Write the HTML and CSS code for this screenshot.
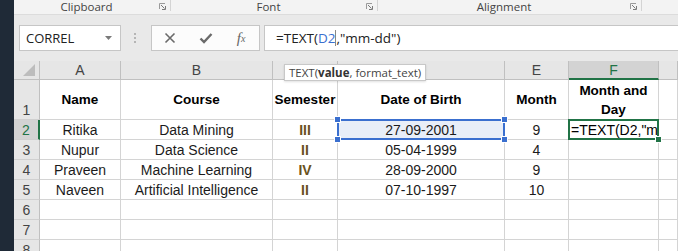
FILE: index.html
```html
<!DOCTYPE html>
<html lang="en">
<head>
  <meta charset="UTF-8">
  <title>Excel - TEXT function</title>
  <link rel="stylesheet" href="styles.css">
</head>
<body>
  <div class="app">
    <div class="side"></div>
    <div class="main">

      <div class="ribbon">
        <div class="group g-clip">
          <span class="group-label">Clipboard</span>
          <svg class="launcher" width="7" height="7" viewBox="0 0 7 7"><path d="M0.5 6V0.5H6" fill="none" stroke="#9a9a9a"/><path d="M2 2L5.5 5.5M3 6.5H6.5V3" fill="none" stroke="#7a7a7a"/></svg>
        </div>
        <div class="group g-font">
          <span class="group-label">Font</span>
          <svg class="launcher" width="7" height="7" viewBox="0 0 7 7"><path d="M0.5 6V0.5H6" fill="none" stroke="#9a9a9a"/><path d="M2 2L5.5 5.5M3 6.5H6.5V3" fill="none" stroke="#7a7a7a"/></svg>
        </div>
        <div class="group g-align">
          <span class="group-label">Alignment</span>
          <svg class="launcher" width="7" height="7" viewBox="0 0 7 7"><path d="M0.5 6V0.5H6" fill="none" stroke="#9a9a9a"/><path d="M2 2L5.5 5.5M3 6.5H6.5V3" fill="none" stroke="#7a7a7a"/></svg>
        </div>
      </div>

      <div class="fbar">
        <div class="namebox">
          <span>CORREL</span>
          <svg width="7" height="4" viewBox="0 0 7 4"><path d="M0 0H7L3.5 4Z" fill="#7a7a7a"/></svg>
        </div>
        <div class="grip"><i></i><i></i><i></i></div>
        <div class="fxbox">
          <span class="fx-btn">
            <svg width="12" height="12" viewBox="0 0 12 12"><path d="M1.5 1.5L10.5 10.5M10.5 1.5L1.5 10.5" stroke="#6a6a6a" stroke-width="1.6"/></svg>
          </span>
          <span class="fx-btn">
            <svg width="14" height="12" viewBox="0 0 14 12"><path d="M1.5 6.5L5 10L12.5 2" fill="none" stroke="#6a6a6a" stroke-width="2.4"/></svg>
          </span>
          <span class="fx-btn fx-label">f<sub>x</sub></span>
        </div>
        <div class="formula">=TEXT(<span class="ref">D2</span><span class="caret"></span>,"mm-dd")</div>
      </div>

      <div class="sheet">
        <div class="row hdr">
          <div class="corner"><i></i></div>
          <div class="ch">A</div>
          <div class="ch">B</div>
          <div class="ch">C</div>
          <div class="ch">D</div>
          <div class="ch">E</div>
          <div class="ch sel">F</div>
          <div class="ch"></div>
        </div>

        <div class="row tall">
          <div class="rh">1</div>
          <div class="c b">Name</div>
          <div class="c b">Course</div>
          <div class="c b">Semester</div>
          <div class="c b">Date of Birth</div>
          <div class="c b">Month</div>
          <div class="c b">Month and Day</div>
          <div class="c"></div>
        </div>

        <div class="row">
          <div class="rh sel">2</div>
          <div class="c">Ritika</div>
          <div class="c">Data Mining</div>
          <div class="c sem">III</div>
          <div class="c ref-cell">27-09-2001
            <span class="ref-box"></span>
            <span class="h tl"></span><span class="h tr"></span><span class="h bl"></span><span class="h br"></span>
          </div>
          <div class="c">9</div>
          <div class="c active"><span class="edit">=TEXT(D2,"mm-dd")</span><span class="act-box"></span><span class="fill"></span></div>
          <div class="c"></div>
        </div>

        <div class="row">
          <div class="rh">3</div>
          <div class="c">Nupur</div>
          <div class="c">Data Science</div>
          <div class="c sem">II</div>
          <div class="c">05-04-1999</div>
          <div class="c">4</div>
          <div class="c"></div>
          <div class="c"></div>
        </div>

        <div class="row">
          <div class="rh">4</div>
          <div class="c">Praveen</div>
          <div class="c">Machine Learning</div>
          <div class="c sem">IV</div>
          <div class="c">28-09-2000</div>
          <div class="c">9</div>
          <div class="c"></div>
          <div class="c"></div>
        </div>

        <div class="row">
          <div class="rh">5</div>
          <div class="c">Naveen</div>
          <div class="c">Artificial Intelligence</div>
          <div class="c sem">II</div>
          <div class="c">07-10-1997</div>
          <div class="c">10</div>
          <div class="c"></div>
          <div class="c"></div>
        </div>

        <div class="row">
          <div class="rh">6</div>
          <div class="c"></div><div class="c"></div><div class="c"></div><div class="c"></div>
          <div class="c"></div><div class="c"></div><div class="c"></div>
        </div>

        <div class="row">
          <div class="rh">7</div>
          <div class="c"></div><div class="c"></div><div class="c"></div><div class="c"></div>
          <div class="c"></div><div class="c"></div><div class="c"></div>
        </div>

        <div class="row">
          <div class="rh">8</div>
          <div class="c"></div><div class="c"></div><div class="c"></div><div class="c"></div>
          <div class="c"></div><div class="c"></div><div class="c"></div>
        </div>

        <div class="tooltip">TEXT(<b>value</b>, format_text)</div>
      </div>

    </div>
  </div>
</body>
</html>
```

FILE: styles.css
```css
* { box-sizing: border-box; margin: 0; padding: 0; }

body {
  width: 678px;
  height: 251px;
  overflow: hidden;
  background: #fff;
  font-family: "Liberation Sans", Arial, sans-serif;
}

.app {
  display: flex;
  height: 251px;
}

.side {
  width: 14px;
  flex-shrink: 0;
  background: #1f2a37;
}

.main {
  flex: 1;
  min-width: 0;
  display: flex;
  flex-direction: column;
}

/* ribbon group labels */
.ribbon {
  height: 15px;
  flex-shrink: 0;
  display: flex;
  background: #f3f3f3;
  border-bottom: 1px solid #dcdcdc;
  font-family: "Open Sans", sans-serif;
  font-size: 11.5px;
  color: #444;
}

.group {
  display: flex;
  align-items: flex-start;
  height: 11px;
  padding-right: 4px;
  border-right: 1px solid #d4d4d4;
}

.g-clip { width: 157px; }
.g-font { width: 207px; }
.g-align { width: 264px; }

.group-label {
  flex: 1;
  text-align: center;
  line-height: 14px;
}

.launcher { margin-top: 3px; }

/* formula bar */
.fbar {
  height: 46px;
  flex-shrink: 0;
  display: flex;
  align-items: flex-start;
  padding: 10px 0 0 5px;
  background: #e9e9e9;
}

.namebox {
  width: 102px;
  height: 26px;
  display: flex;
  align-items: center;
  justify-content: space-between;
  padding: 0 8px 0 6px;
  background: #fff;
  border: 1px solid #c6c6c6;
  font-family: "Open Sans", sans-serif;
  font-size: 13px;
  color: #222;
}

.grip {
  width: 3px;
  margin: 8px 14px 0 13px;
  display: flex;
  flex-direction: column;
  gap: 2px;
}

.grip i {
  width: 2px;
  height: 2px;
  background: #b5b5b5;
}

.fxbox {
  width: 109px;
  height: 26px;
  display: flex;
  align-items: center;
  background: #fcfcfc;
  border: 1px solid #c6c6c6;
}

.fx-btn {
  width: 36px;
  display: flex;
  justify-content: center;
  align-items: center;
}

.fx-label {
  font-family: "Liberation Serif", serif;
  font-style: italic;
  font-size: 15px;
  color: #666;
}

.fx-label sub {
  font-size: 10px;
  vertical-align: -1px;
}

.formula {
  flex: 1;
  height: 26px;
  margin-left: 4px;
  display: flex;
  align-items: center;
  padding-left: 11px;
  background: #fff;
  border: 1px solid #c6c6c6;
  border-right: none;
  white-space: nowrap;
  font-family: "Open Sans", sans-serif;
  font-size: 13.5px;
  color: #222;
}

.formula .ref { color: #3a6fcf; }

.caret {
  width: 1px;
  height: 16px;
  background: #888;
}

/* sheet grid */
.sheet {
  position: relative;
  flex: 1;
  overflow: hidden;
}

.row {
  display: grid;
  grid-template-columns: 26px 81px 152px 65px 167px 64px 90px 1fr;
  height: 20px;
}

.row.hdr { height: 19px; }
.row.tall { height: 40px; }

.c {
  display: flex;
  align-items: center;
  justify-content: center;
  text-align: center;
  border-right: 1px solid #d4d4d4;
  border-bottom: 1px solid #d4d4d4;
  font-size: 14px;
  color: #1b1b1b;
  white-space: nowrap;
}

.c.b {
  font-size: 13.5px;
  font-weight: bold;
  color: #000;
  white-space: normal;
  line-height: 19px;
}

.c.sem {
  font-weight: bold;
  color: #6a5220;
}

.corner,
.ch,
.rh {
  background: #e6e6e6;
  border-right: 1px solid #c0c0c0;
  border-bottom: 1px solid #c0c0c0;
  color: #444;
  font-size: 14px;
}

.corner {
  display: flex;
  justify-content: flex-end;
  align-items: flex-end;
  padding: 0 4px 3px 0;
}

.corner i {
  width: 12px;
  height: 12px;
  background: #bdbdbd;
  clip-path: polygon(100% 0, 100% 100%, 0 100%);
}

.ch {
  display: flex;
  align-items: center;
  justify-content: center;
}

.ch.sel {
  background: #d3d3d3;
  color: #217346;
  border-bottom: 2px solid #217346;
}

.rh {
  display: flex;
  align-items: flex-end;
  justify-content: center;
  padding-bottom: 1px;
  border-bottom-color: #d0d0d0;
}

.rh.sel {
  background: #d3d3d3;
  color: #217346;
  border-right: 2px solid #217346;
}

/* referenced cell D2 */
.ref-cell {
  position: relative;
  background: #e8eef8;
}

.ref-box {
  position: absolute;
  left: -1px;
  top: -1px;
  right: -1px;
  bottom: -1px;
  border: 2px solid #3a6fcf;
}

.h {
  position: absolute;
  width: 7px;
  height: 7px;
  background: #3a6fcf;
  border: 1px solid #fff;
}

.h.tl { left: -4px; top: -4px; }
.h.tr { right: -4px; top: -4px; }
.h.bl { left: -4px; bottom: -4px; }
.h.br { right: -4px; bottom: -4px; }

/* active cell F2 */
.c.active {
  position: relative;
  justify-content: flex-start;
  padding-left: 2px;
}

.edit {
  display: block;
  overflow: hidden;
  width: 100%;
  text-align: left;
  color: #000;
}

.act-box {
  position: absolute;
  left: -1px;
  top: -1px;
  right: -1px;
  bottom: -1px;
  border: 2px solid #217346;
}

.fill {
  position: absolute;
  right: -4px;
  bottom: -4px;
  width: 7px;
  height: 7px;
  background: #217346;
  border: 1px solid #fff;
}

/* function tooltip */
.tooltip {
  position: absolute;
  left: 270px;
  top: 3px;
  width: 142px;
  height: 17px;
  padding-left: 4px;
  background: #fff;
  border: 1px solid #c8c8c8;
  box-shadow: 0 1px 2px rgba(0, 0, 0, 0.12);
  font-family: "Open Sans", sans-serif;
  font-size: 11.5px;
  line-height: 15px;
  color: #444;
  white-space: nowrap;
}

.tooltip b { color: #333; }
```
